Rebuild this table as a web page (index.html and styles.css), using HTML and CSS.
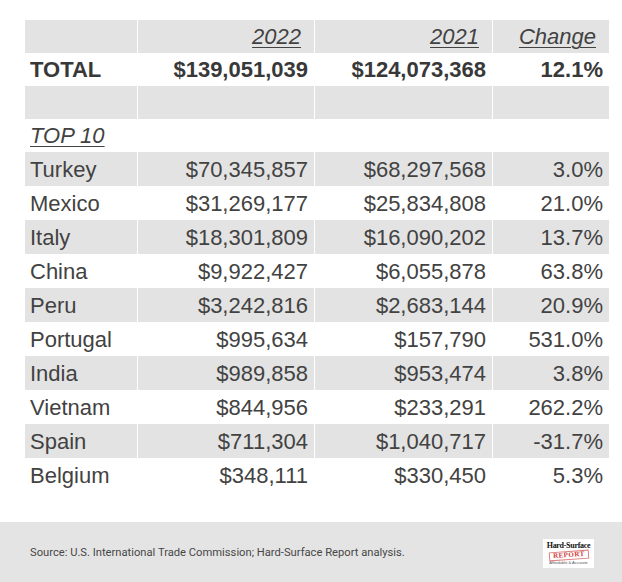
FILE: index.html
```html
<!DOCTYPE html>
<html>
<head>
<meta charset="utf-8">
<link rel="stylesheet" href="styles.css">
</head>
<body>
<div class="page">
  <div class="table">
    <div class="row head short">
      <div class="cell"></div>
      <div class="cell num"><span class="hd">2022</span></div>
      <div class="cell num"><span class="hd">2021</span></div>
      <div class="cell num"><span class="hd">Change</span></div>
    </div>
    <div class="row total short">
      <div class="cell">TOTAL</div>
      <div class="cell num">$139,051,039</div>
      <div class="cell num">$124,073,368</div>
      <div class="cell num">12.1%</div>
    </div>
    <div class="row short gray">
      <div class="cell"></div><div class="cell"></div><div class="cell"></div><div class="cell"></div>
    </div>
    <div class="row short">
      <div class="cell"><span class="hd">TOP 10</span></div>
      <div class="cell"></div><div class="cell"></div><div class="cell"></div>
    </div>
    <div class="row gray"><div class="cell">Turkey</div><div class="cell num">$70,345,857</div><div class="cell num">$68,297,568</div><div class="cell num">3.0%</div></div>
    <div class="row"><div class="cell">Mexico</div><div class="cell num">$31,269,177</div><div class="cell num">$25,834,808</div><div class="cell num">21.0%</div></div>
    <div class="row gray"><div class="cell">Italy</div><div class="cell num">$18,301,809</div><div class="cell num">$16,090,202</div><div class="cell num">13.7%</div></div>
    <div class="row"><div class="cell">China</div><div class="cell num">$9,922,427</div><div class="cell num">$6,055,878</div><div class="cell num">63.8%</div></div>
    <div class="row gray"><div class="cell">Peru</div><div class="cell num">$3,242,816</div><div class="cell num">$2,683,144</div><div class="cell num">20.9%</div></div>
    <div class="row"><div class="cell">Portugal</div><div class="cell num">$995,634</div><div class="cell num">$157,790</div><div class="cell num">531.0%</div></div>
    <div class="row gray"><div class="cell">India</div><div class="cell num">$989,858</div><div class="cell num">$953,474</div><div class="cell num">3.8%</div></div>
    <div class="row"><div class="cell">Vietnam</div><div class="cell num">$844,956</div><div class="cell num">$233,291</div><div class="cell num">262.2%</div></div>
    <div class="row gray"><div class="cell">Spain</div><div class="cell num">$711,304</div><div class="cell num">$1,040,717</div><div class="cell num">-31.7%</div></div>
    <div class="row"><div class="cell">Belgium</div><div class="cell num">$348,111</div><div class="cell num">$330,450</div><div class="cell num">5.3%</div></div>
  </div>
  <div class="footer">
    <div class="source">Source: U.S. International Trade Commission; Hard-Surface Report analysis.</div>
    <div class="logo">
      <div class="logo-title">Hard-Surface</div>
      <div class="logo-stamp">REPORT</div>
      <div class="logo-tag">Affordable &amp; Accurate</div>
    </div>
  </div>
</div>
</body>
</html>
```

FILE: styles.css
```css
html, body {
  margin: 0;
  padding: 0;
  background: #ffffff;
}

.page {
  width: 622px;
  height: 582px;
  display: flex;
  flex-direction: column;
  overflow: hidden;
}

.table {
  margin: 20px 0 0 25px;
  width: 584px;
  display: flex;
  flex-direction: column;
  font-family: "Liberation Sans", Arial, sans-serif;
  font-size: 22px;
  color: #424242;
}

.row {
  display: grid;
  grid-template-columns: 112px 176px 177px 116px;
  column-gap: 1px;
  height: 34px;
}

.row.short {
  height: 33px;
}

.cell {
  display: flex;
  align-items: center;
  padding: 1px 6px 0 5px;
  white-space: nowrap;
}

.cell.num {
  justify-content: flex-end;
}

.row.gray .cell,
.row.head .cell {
  background: #e3e3e3;
}

.row.head .cell.num {
  padding-right: 13px;
}

.hd {
  font-style: italic;
  text-decoration: underline;
  text-underline-offset: 3px;
  text-decoration-thickness: 1px;
}

.row.total .cell {
  font-weight: bold;
  color: #383838;
}

.footer {
  margin-top: 30px;
  height: 60px;
  background: #e4e4e4;
  display: flex;
  align-items: center;
  justify-content: space-between;
  padding: 0 28px 0 30px;
}

.source {
  font-family: Roboto, "Liberation Sans", sans-serif;
  font-size: 11.2px;
  color: #474747;
  padding-top: 1px;
}

.logo {
  width: 51px;
  height: 29px;
  background: #ffffff;
  display: flex;
  flex-direction: column;
  align-items: center;
  justify-content: center;
  gap: 1px;
  margin-top: 2px;
}

.logo-title {
  font-family: "Liberation Serif", serif;
  font-weight: bold;
  font-size: 8px;
  line-height: 8px;
  letter-spacing: -0.3px;
  color: #111111;
}

.logo-stamp {
  font-family: "Liberation Serif", serif;
  font-weight: bold;
  font-size: 7px;
  line-height: 7px;
  color: #d04040;
  border: 1px solid #e08080;
  padding: 0 3px;
  transform: rotate(-4deg);
  letter-spacing: 0.5px;
}

.logo-tag {
  font-family: "Liberation Sans", sans-serif;
  font-size: 4px;
  line-height: 4px;
  color: #555555;
}
```
